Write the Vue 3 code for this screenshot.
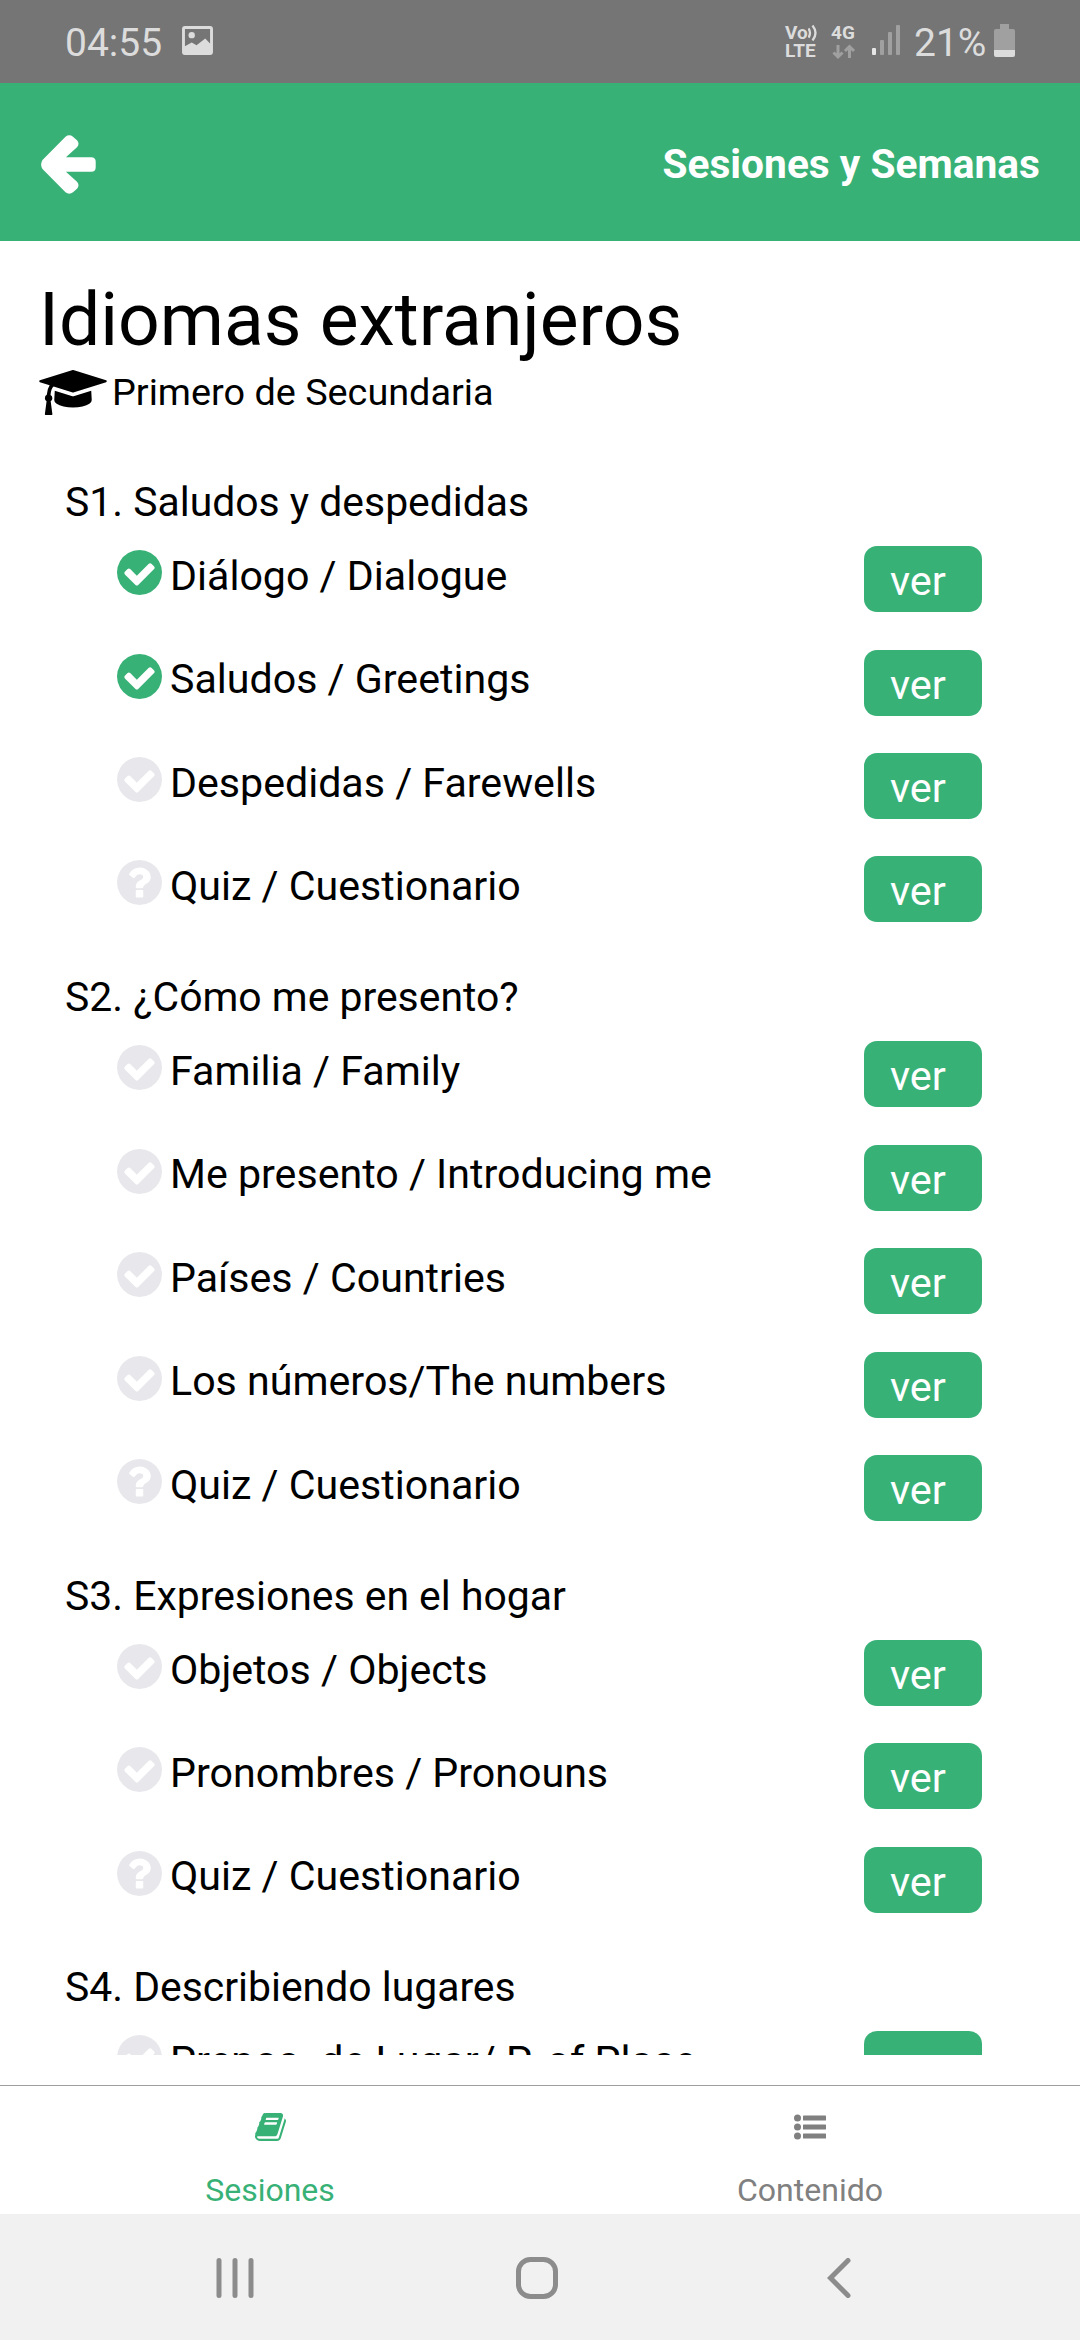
<script setup>
const CHECK = 'M1412 734q0-28-18-46l-91-90q-19-19-45-19t-45 19l-408 407-226-226q-19-19-45-19t-45 19l-91 90q-18 18-18 46 0 27 18 45l362 362q19 19 45 19 27 0 46-19l543-543q18-18 18-45zm252 162q0 209-103 385.5t-279.500 279.500-385.500 103-385.500-103-279.500-279.500-103-385.500 103-385.500 279.500-279.500 385.500-103 385.500 103 279.500 279.500 103 385.500z'
const QUESTION = 'M1024 1376v-192q0-14-9-23t-23-9h-192q-14 0-23 9t-9 23v192q0 14 9 23t23 9h192q14 0 23-9t9-23zm256-672q0-88-55.500-163t-138.500-116-170-41q-243 0-371 213-15 24 8 42l132 100q7 6 19 6 16 0 25-12 53-68 86-92 34-24 86-24 48 0 85.500 26t37.500 59q0 38-20 61t-68 45q-63 28-115.500 86.500t-52.500 125.500v36q0 14 9 23t23 9h192q14 0 23-9t9-23q0-19 21.500-49.500t54.500-49.500q32-18 49-28.500t46-35 44.500-48 28-60.500 12.500-81zm384 192q0 209-103 385.500t-279.500 279.500-385.500 103-385.500-103-279.500-279.500-103-385.500 103-385.500 279.500-279.500 385.500-103 385.500 103 279.500 279.500 103 385.500z'

const sessions = [
  {
    title: 'S1. Saludos y despedidas',
    items: [
      { name: 'Diálogo / Dialogue', done: true },
      { name: 'Saludos / Greetings', done: true },
      { name: 'Despedidas / Farewells' },
      { name: 'Quiz / Cuestionario', quiz: true },
    ],
  },
  {
    title: 'S2. ¿Cómo me presento?',
    items: [
      { name: 'Familia / Family' },
      { name: 'Me presento / Introducing me' },
      { name: 'Países / Countries' },
      { name: 'Los números/The numbers' },
      { name: 'Quiz / Cuestionario', quiz: true },
    ],
  },
  {
    title: 'S3. Expresiones en el hogar',
    items: [
      { name: 'Objetos / Objects' },
      { name: 'Pronombres / Pronouns' },
      { name: 'Quiz / Cuestionario', quiz: true },
    ],
  },
  {
    title: 'S4. Describiendo lugares',
    items: [{ name: 'Prepos. de Lugar/ P. of Place' }],
  },
]
</script>

<template>
  <div class="screen">
    <div class="status">
      <span class="clock">04:55</span>
      <svg class="photo" width="31" height="29" viewBox="0 0 32 30">
        <path fill="#dcdcdc" fill-rule="evenodd" d="M3 0h26a3 3 0 0 1 3 3v24a3 3 0 0 1-3 3H3a3 3 0 0 1-3-3V3a3 3 0 0 1 3-3zM3 3v18l7-4 5 3 9-7 5 5V3z" />
        <circle cx="10" cy="9.500" r="3.300" fill="#dcdcdc" />
      </svg>
      <div class="spacer"></div>
      <div class="volte">
        <span class="vo">Vo<svg width="10" height="17" viewBox="0 0 10 17"><path d="M.5 4.500q3 4.500 0 9M4.500 1.500q6 7.500 0 15" fill="none" stroke="#dcdcdc" stroke-width="2.300" /></svg></span>
        <span>LTE</span>
      </div>
      <div class="net">
        <span>4G</span>
        <svg width="24" height="16" viewBox="0 0 24 16"><path d="M6 1v12M1.500 8.500L6 13l4.500-4.500M17.500 14V3M13 7l4.500-4.500L22 7" fill="none" stroke="#a0a0a0" stroke-width="3" /></svg>
      </div>
      <svg class="signal" width="28" height="30" viewBox="0 0 28 30">
        <rect x="0" y="23" width="4" height="7" rx="1" fill="#e6e6e6" />
        <rect x="8" y="15" width="4" height="15" rx="1" fill="#a0a0a0" />
        <rect x="16" y="7" width="4" height="23" rx="1" fill="#a0a0a0" />
        <rect x="24" y="0" width="4" height="30" rx="1" fill="#a0a0a0" />
      </svg>
      <span class="percent">21%</span>
      <svg class="battery" width="21" height="33" viewBox="0 0 21 33">
        <path d="M6 0h9v5h4a2 2 0 0 1 2 2v19H0V7a2 2 0 0 1 2-2h4z" fill="#a0a0a0" />
        <path d="M0 26h21v5a2 2 0 0 1-2 2H2a2 2 0 0 1-2-2z" fill="#dcdcdc" />
      </svg>
    </div>

    <header class="appbar">
      <svg class="back" width="55" height="59" viewBox="0 0 55 59">
        <path fill="#fff" d="M1.500 25L24.500 1.700Q28.300 -1.200 32 1.700L36 5.200Q39 9 36 12.200L24.900 22.200H50.200Q54.700 22.200 54.700 26.700V32.200Q54.700 36.700 50.200 36.700H24.900L36 46.800Q39 50 36 53.800L32 57.300Q28.300 60.200 24.500 57.300L1.500 34Q-1.300 29.500 1.500 25z" />
      </svg>
      <h1>Sesiones y Semanas</h1>
    </header>

    <main class="content">
      <h2>Idiomas extranjeros</h2>
      <div class="grade">
        <svg width="68" height="45" viewBox="0 128 2304 1536">
          <path d="M1774 836l18 316q4 69-82 128t-235 93.500-323 34.500-323-34.500-235-93.500-82-128l18-316 574 181q22 7 48 7t48-7zm530-324q0 23-22 31l-1120 352q-4 1-10 1t-10-1l-652-206q-43 34-71 111.500t-34 178.500q63 36 63 109 0 69-58 107l58 433q2 14-8 25-9 11-24 11h-192q-15 0-24-11-10-11-8-25l58-433q-58-38-58-107 0-73 65-111 11-207 98-330l-333-104q-22-8-22-31t22-31l1120-352q4-1 10-1t10 1l1120 352q22 8 22 31z" />
        </svg>
        <span>Primero de Secundaria</span>
      </div>

      <section v-for="session in sessions" :key="session.title" class="session">
        <h3>{{ session.title }}</h3>
        <div v-for="item in session.items" :key="item.name" class="item">
          <svg class="mark" :class="{ done: item.done }" width="45" height="45" viewBox="128 128 1536 1536">
            <path :d="item.quiz ? QUESTION : CHECK" />
          </svg>
          <span class="name">{{ item.name }}</span>
          <button>ver</button>
        </div>
      </section>
    </main>

    <nav class="tabs">
      <a class="tab active">
        <svg width="31" height="28" viewBox="64 128 1664 1536" preserveAspectRatio="none">
          <path d="M1703 478q40 57 18 129l-275 906q-19 64-76.500 107.500t-122.500 43.500h-923q-77 0-148.500-53.500t-99.500-131.500q-24-67-2-127 0-4 3-27t4-37q1-8-3-21.500t-3-19.500q2-11 8-21t16.500-23.500 16.500-23.500q23-38 45-91.500t30-91.500q3-10 .5-30t-.5-28q3-11 17-28t17-23q21-36 42-92t25-90q1-9-2.500-32t.5-28q4-13 22-30.500t22-22.500q19-26 42.500-84.500t27.500-96.500q1-8-3-25.500t-2-26.500q2-8 9-18t18-23 17-21q8-12 16.500-30.500t15-35 16-36 19.500-32 26.500-23.500 36-11.500 47.500 5.500l-1 3q38-9 51-9h761q74 0 114 56t18 130l-274 906q-36 119-71.500 153.500t-128.500 34.500h-869q-27 0-38 15-11 16-1 43 24 70 144 70h923q29 0 56-15.500t35-41.500l300-987q7-22 5-57 38 15 59 43zm-1064 2q-4 13 2 22.500t20 9.500h608q13 0 25.500-9.500t16.500-22.500l21-64q4-13-2-22.500t-20-9.500h-608q-13 0-25.500 9.500t-16.500 22.500zm-83 256q-4 13 2 22.500t20 9.500h608q13 0 25.500-9.500t16.500-22.500l21-64q4-13-2-22.500t-20-9.500h-608q-13 0-25.500 9.500t-16.500 22.500z" />
        </svg>
        <span>Sesiones</span>
      </a>
      <a class="tab">
        <svg width="32" height="28" viewBox="0 0 32 28">
          <circle cx="3.500" cy="5" r="3.500" /><circle cx="3.500" cy="14" r="3.500" /><circle cx="3.500" cy="23" r="3.500" />
          <rect x="9" y="2.500" width="23" height="5" rx=".6" /><rect x="9" y="11.500" width="23" height="5" rx=".6" /><rect x="9" y="20.500" width="23" height="5" rx=".6" />
        </svg>
        <span>Contenido</span>
      </a>
    </nav>

    <div class="system">
      <svg width="38" height="40" viewBox="0 0 38 40"><path d="M3 2.500v35M19 2.500v35M35 2.500v35" stroke="#8c8c8c" stroke-width="5" stroke-linecap="round" /></svg>
      <svg width="42" height="42" viewBox="0 0 42 42"><rect x="2.500" y="2.500" width="37" height="37" rx="12" fill="none" stroke="#8c8c8c" stroke-width="5" /></svg>
      <svg width="24" height="40" viewBox="0 0 24 40"><path d="M21 2.500L3.500 20L21 37.500" fill="none" stroke="#8c8c8c" stroke-width="5" stroke-linecap="round" /></svg>
    </div>
  </div>
</template>

<style>
body { background: #fff; }
</style>

<style scoped>
.screen {
  width: 1080px;
  height: 2340px;
  display: flex;
  flex-direction: column;
  overflow: hidden;
  background: #fff;
  color: #000;
  font-family: Roboto, sans-serif;
}
svg { display: block; flex: none; }
h1, h2, h3 { margin: 0; font-weight: 400; }

.status {
  flex: none;
  height: 83px;
  box-sizing: border-box;
  padding: 0 65px;
  display: flex;
  align-items: flex-start;
  background: #757575;
  color: #dcdcdc;
}
.spacer { flex: 1; }
.clock, .percent { font-size: 39px; line-height: 46px; margin-top: 20px; }
.clock { width: 117px; }
.photo { margin-top: 26px; }
.volte, .net {
  display: flex;
  flex-direction: column;
  margin-top: 24px;
  font-size: 19px;
  line-height: 17.500px;
  font-weight: 700;
}
.volte { width: 46px; }
.vo { display: flex; }
.net { width: 41px; }
.net svg { margin: 2px 0 0 1px; }
.signal { margin: 25px 14px 0 0; }
.percent { width: 80px; }
.battery { margin: 24px 0 0; }

.appbar {
  flex: none;
  height: 158px;
  box-sizing: border-box;
  padding: 0 40px 0 41px;
  display: flex;
  align-items: center;
  justify-content: space-between;
  background: #38b177;
  color: #fff;
}
.back { margin-top: 4px; }
.appbar h1 { font-size: 40.700px; line-height: 50px; font-weight: 700; margin-top: 4px; }

.content {
  flex: none;
  height: 1814px;
  box-sizing: border-box;
  padding: 36px 0 0 39px;
  overflow: hidden;
}
h2 { font-size: 73.200px; line-height: 86px; }
.grade {
  display: flex;
  height: 60px;
  padding-top: 7px;
  margin-bottom: 34.800px;
  font-size: 37.800px;
  line-height: 45px;
  gap: 5px;
}
.session { padding-left: 26px; }
.session h3 {
  height: 81.500px;
  box-sizing: border-box;
  padding-top: 13.200px;
  font-size: 40.900px;
  line-height: 49px;
}
.item {
  display: flex;
  height: 103.400px;
  padding-left: 52px;
  align-items: flex-start;
  font-size: 41.150px;
}
.mark { fill: #e8e8ec; margin-top: 4px; }
.mark.done { fill: #38b177; }
.name { margin: 5.700px 0 0 8px; line-height: 49px; width: 694px; white-space: nowrap; }
button {
  width: 118px;
  height: 66px;
  box-sizing: border-box;
  padding: 4px 0 0 26px;
  border: 0;
  border-radius: 13px;
  background: #38b177;
  color: #fff;
  font: 41.500px/52px Roboto, sans-serif;
  text-align: left;
}

.tabs {
  flex: none;
  height: 129px;
  margin-top: 30px;
  box-sizing: border-box;
  border-top: 1px solid #9e9e9e;
  display: flex;
}
.tab {
  flex: 1;
  display: flex;
  flex-direction: column;
  align-items: center;
  padding-top: 27px;
  color: #808080;
  fill: #808080;
  font-size: 32px;
  line-height: 38px;
  gap: 30px;
}
.tab.active { color: #38b177; fill: #38b177; }

.system {
  flex: 1;
  display: flex;
  align-items: center;
  padding: 2px 0 0 216px;
  background: #f1f1f1;
}
.system svg + svg { margin-left: 262px; }
.system svg:last-child { margin-left: 269px; }
</style>
